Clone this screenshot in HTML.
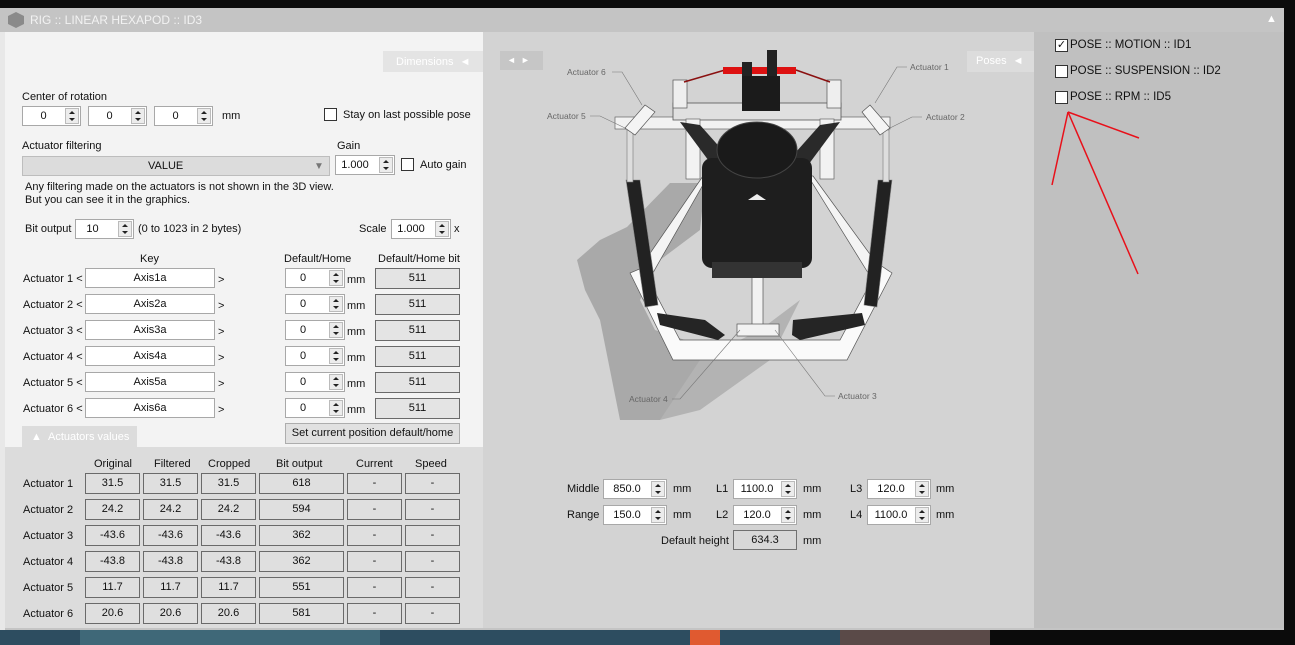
<!DOCTYPE html>
<html><head><meta charset="utf-8"><style>
*{box-sizing:border-box;margin:0;padding:0}
body{width:1295px;height:645px;overflow:hidden;background:#0b0b0b;font-family:"Liberation Sans",sans-serif;font-size:11px;color:#111;position:relative}
.a{position:absolute}
.t{position:absolute;white-space:nowrap;line-height:13px}
.box{position:absolute;background:#fff;border:1px solid #a8a8a8;text-align:center;line-height:18px;height:20px}
.ro{position:absolute;background:#e4e4e4;border:1px solid #6a6a6a;text-align:center;line-height:19px;height:21px}
.sp{position:absolute;background:#fff;border:1px solid #a8a8a8;height:20px;line-height:19px}
.sp span{position:absolute;left:0;right:16px;text-align:center}
.sp i{position:absolute;right:1px;top:1px;width:14px;height:16px;background:#ececec;border:1px solid #bbb}
.sp i:before{content:"";position:absolute;left:3px;top:2px;border-left:3px solid transparent;border-right:3px solid transparent;border-bottom:3px solid #222}
.sp i:after{content:"";position:absolute;left:3px;top:9px;border-left:3px solid transparent;border-right:3px solid transparent;border-top:3px solid #222}
.cb{position:absolute;width:13px;height:13px;background:#fff;border:1px solid #333}
.lv{position:absolute;background:#dfdfdf;border:1px solid #6a6a6a;text-align:center;line-height:19px;height:21px}
</style></head><body>
<div class="a" style="left:0;top:628px;width:990px;height:17px;background:#2d4d60"></div>
<div class="a" style="left:80px;top:628px;width:300px;height:17px;background:#3f6878"></div>
<div class="a" style="left:840px;top:628px;width:150px;height:17px;background:#5a4a48"></div>
<div class="a" style="left:690px;top:628px;width:30px;height:17px;background:#e05a30"></div>
<div class="a" style="left:0;top:8px;width:1284px;height:622px;background:#c4c4c4"></div>
<div class="a" style="left:8px;top:12px;width:16px;height:16px;background:#8a8a8a;clip-path:polygon(50% 0,100% 25%,100% 75%,50% 100%,0 75%,0 25%)"></div>
<div class="t" style="left:30px;top:14px;font-size:12px;color:#f2f2f2">RIG :: LINEAR HEXAPOD :: ID3</div>
<div class="t" style="left:1266px;top:13px;font-size:11px;color:#fff">▲</div>
<div class="a" style="left:0;top:32px;width:5px;height:598px;background:#e8e8e8"></div>
<div class="a" style="left:5px;top:32px;width:478px;height:415px;background:#f3f3f3"></div>
<div class="a" style="left:5px;top:447px;width:478px;height:181px;background:#dcdcdc"></div>
<div class="a" style="left:383px;top:51px;width:100px;height:21px;background:#e4e4e4"></div>
<div class="t" style="left:396px;top:56px;color:#fff;font-size:11px">Dimensions &nbsp;◄</div>

<div class="t" style="left:22px;top:91px">Center of rotation</div>
<div class="sp" style="left:22px;top:106px;width:59px"><span>0</span><i></i></div>
<div class="sp" style="left:88px;top:106px;width:59px"><span>0</span><i></i></div>
<div class="sp" style="left:154px;top:106px;width:59px"><span>0</span><i></i></div>
<div class="t" style="left:222px;top:110px">mm</div>
<div class="cb" style="left:324px;top:108px"></div>
<div class="t" style="left:343px;top:109px">Stay on last possible pose</div>

<div class="t" style="left:22px;top:140px">Actuator filtering</div>
<div class="t" style="left:337px;top:140px">Gain</div>
<div class="a" style="left:22px;top:156px;width:308px;height:20px;background:#dcdcdc;border:1px solid #bdbdbd"></div>
<div class="t" style="left:148px;top:160px">VALUE</div>
<div class="t" style="left:314px;top:160px;color:#777;font-size:10px">▼</div>
<div class="sp" style="left:335px;top:155px;width:60px"><span style="right:20px">1.000</span><i></i></div>
<div class="cb" style="left:401px;top:158px"></div>
<div class="t" style="left:420px;top:159px">Auto gain</div>
<div class="t" style="left:25px;top:181px">Any filtering made on the actuators is not shown in the 3D view.</div>
<div class="t" style="left:25px;top:194px">But you can see it in the graphics.</div>

<div class="t" style="left:25px;top:223px">Bit output</div>
<div class="sp" style="left:75px;top:219px;width:59px"><span style="right:24px">10</span><i></i></div>
<div class="t" style="left:138px;top:223px">(0 to 1023 in 2 bytes)</div>
<div class="t" style="left:359px;top:223px">Scale</div>
<div class="sp" style="left:391px;top:219px;width:60px"><span style="right:20px">1.000</span><i></i></div>
<div class="t" style="left:454px;top:223px">x</div>

<div class="t" style="left:140px;top:253px">Key</div>
<div class="t" style="left:284px;top:253px">Default/Home</div>
<div class="t" style="left:378px;top:253px">Default/Home bit</div>

<div class="t" style="left:23px;top:273px">Actuator 1 &lt;</div><div class="box" style="left:85px;top:268px;width:130px">Axis1a</div><div class="t" style="left:218px;top:274px">&gt;</div><div class="sp" style="left:285px;top:268px;width:60px"><span style="right:24px">0</span><i></i></div><div class="t" style="left:347px;top:274px">mm</div><div class="ro" style="left:375px;top:268px;width:85px">511</div>
<div class="t" style="left:23px;top:299px">Actuator 2 &lt;</div><div class="box" style="left:85px;top:294px;width:130px">Axis2a</div><div class="t" style="left:218px;top:300px">&gt;</div><div class="sp" style="left:285px;top:294px;width:60px"><span style="right:24px">0</span><i></i></div><div class="t" style="left:347px;top:300px">mm</div><div class="ro" style="left:375px;top:294px;width:85px">511</div>
<div class="t" style="left:23px;top:325px">Actuator 3 &lt;</div><div class="box" style="left:85px;top:320px;width:130px">Axis3a</div><div class="t" style="left:218px;top:326px">&gt;</div><div class="sp" style="left:285px;top:320px;width:60px"><span style="right:24px">0</span><i></i></div><div class="t" style="left:347px;top:326px">mm</div><div class="ro" style="left:375px;top:320px;width:85px">511</div>
<div class="t" style="left:23px;top:351px">Actuator 4 &lt;</div><div class="box" style="left:85px;top:346px;width:130px">Axis4a</div><div class="t" style="left:218px;top:352px">&gt;</div><div class="sp" style="left:285px;top:346px;width:60px"><span style="right:24px">0</span><i></i></div><div class="t" style="left:347px;top:352px">mm</div><div class="ro" style="left:375px;top:346px;width:85px">511</div>
<div class="t" style="left:23px;top:377px">Actuator 5 &lt;</div><div class="box" style="left:85px;top:372px;width:130px">Axis5a</div><div class="t" style="left:218px;top:378px">&gt;</div><div class="sp" style="left:285px;top:372px;width:60px"><span style="right:24px">0</span><i></i></div><div class="t" style="left:347px;top:378px">mm</div><div class="ro" style="left:375px;top:372px;width:85px">511</div>
<div class="t" style="left:23px;top:403px">Actuator 6 &lt;</div><div class="box" style="left:85px;top:398px;width:130px">Axis6a</div><div class="t" style="left:218px;top:404px">&gt;</div><div class="sp" style="left:285px;top:398px;width:60px"><span style="right:24px">0</span><i></i></div><div class="t" style="left:347px;top:404px">mm</div><div class="ro" style="left:375px;top:398px;width:85px">511</div>

<div class="a" style="left:285px;top:423px;width:175px;height:21px;background:#e1e1e1;border:1px solid #adadad;text-align:center;line-height:19px">Set current position default/home</div>
<div class="a" style="left:22px;top:426px;width:115px;height:21px;background:#dcdcdc"></div>
<div class="t" style="left:31px;top:431px;color:#fff">▲ &nbsp;Actuators values</div>

<div class="t" style="left:94px;top:458px">Original</div>
<div class="t" style="left:154px;top:458px">Filtered</div>
<div class="t" style="left:208px;top:458px">Cropped</div>
<div class="t" style="left:276px;top:458px">Bit output</div>
<div class="t" style="left:356px;top:458px">Current</div>
<div class="t" style="left:415px;top:458px">Speed</div>

<div class="t" style="left:23px;top:478px">Actuator 1</div><div class="lv" style="left:85px;top:473px;width:55px">31.5</div><div class="lv" style="left:143px;top:473px;width:55px">31.5</div><div class="lv" style="left:201px;top:473px;width:55px">31.5</div><div class="lv" style="left:259px;top:473px;width:85px">618</div><div class="lv" style="left:347px;top:473px;width:55px">-</div><div class="lv" style="left:405px;top:473px;width:55px">-</div>
<div class="t" style="left:23px;top:504px">Actuator 2</div><div class="lv" style="left:85px;top:499px;width:55px">24.2</div><div class="lv" style="left:143px;top:499px;width:55px">24.2</div><div class="lv" style="left:201px;top:499px;width:55px">24.2</div><div class="lv" style="left:259px;top:499px;width:85px">594</div><div class="lv" style="left:347px;top:499px;width:55px">-</div><div class="lv" style="left:405px;top:499px;width:55px">-</div>
<div class="t" style="left:23px;top:530px">Actuator 3</div><div class="lv" style="left:85px;top:525px;width:55px">-43.6</div><div class="lv" style="left:143px;top:525px;width:55px">-43.6</div><div class="lv" style="left:201px;top:525px;width:55px">-43.6</div><div class="lv" style="left:259px;top:525px;width:85px">362</div><div class="lv" style="left:347px;top:525px;width:55px">-</div><div class="lv" style="left:405px;top:525px;width:55px">-</div>
<div class="t" style="left:23px;top:556px">Actuator 4</div><div class="lv" style="left:85px;top:551px;width:55px">-43.8</div><div class="lv" style="left:143px;top:551px;width:55px">-43.8</div><div class="lv" style="left:201px;top:551px;width:55px">-43.8</div><div class="lv" style="left:259px;top:551px;width:85px">362</div><div class="lv" style="left:347px;top:551px;width:55px">-</div><div class="lv" style="left:405px;top:551px;width:55px">-</div>
<div class="t" style="left:23px;top:582px">Actuator 5</div><div class="lv" style="left:85px;top:577px;width:55px">11.7</div><div class="lv" style="left:143px;top:577px;width:55px">11.7</div><div class="lv" style="left:201px;top:577px;width:55px">11.7</div><div class="lv" style="left:259px;top:577px;width:85px">551</div><div class="lv" style="left:347px;top:577px;width:55px">-</div><div class="lv" style="left:405px;top:577px;width:55px">-</div>
<div class="t" style="left:23px;top:608px">Actuator 6</div><div class="lv" style="left:85px;top:603px;width:55px">20.6</div><div class="lv" style="left:143px;top:603px;width:55px">20.6</div><div class="lv" style="left:201px;top:603px;width:55px">20.6</div><div class="lv" style="left:259px;top:603px;width:85px">581</div><div class="lv" style="left:347px;top:603px;width:55px">-</div><div class="lv" style="left:405px;top:603px;width:55px">-</div>

<div class="a" style="left:483px;top:32px;width:551px;height:596px;background:#d3d3d3"></div>
<div class="a" style="left:500px;top:51px;width:43px;height:19px;background:#c6c6c6"></div>
<div class="t" style="left:507px;top:54px;color:#fff;font-size:9px">◄ &nbsp;►</div>
<div class="a" style="left:967px;top:51px;width:67px;height:21px;background:#dcdcdc"></div>
<div class="t" style="left:976px;top:55px;color:#fff">Poses &nbsp;◄</div>

<svg class="a" style="left:483px;top:32px" width="551" height="400" viewBox="483 32 551 400">
 <polygon points="577,260 600,240 627,227 670,183 705,183 700,230 660,260 640,300 655,330 700,345 720,360 700,380 660,420 620,420 615,395 600,320 585,290" fill="#a9a9a9"/>
 <polygon points="700,360 760,330 800,300 770,360 700,410 660,420" fill="#b3b3b3"/>
 <polygon points="630,273 673,360 847,360 892,273 880,265 840,340 680,340 642,268" fill="#fafafa" stroke="#555" stroke-width="0.7"/>
 <polygon points="640,268 703,176 708,176 650,278" fill="#f4f4f4" stroke="#555" stroke-width="0.7"/>
 <polygon points="808,176 813,176 880,268 870,276" fill="#f4f4f4" stroke="#555" stroke-width="0.7"/>
 <rect x="752" y="270" width="11" height="58" fill="#f2f2f2" stroke="#555" stroke-width="0.7"/>
 <rect x="615" y="117" width="275" height="12" fill="#f2f2f2" stroke="#666" stroke-width="0.7"/>
 <rect x="673" y="103" width="168" height="17" fill="#e0e0e0" stroke="#555" stroke-width="0.8"/>
 <rect x="686" y="119" width="14" height="60" fill="#f2f2f2" stroke="#666" stroke-width="0.7"/>
 <rect x="820" y="119" width="14" height="60" fill="#f2f2f2" stroke="#666" stroke-width="0.7"/>
 <rect x="673" y="80" width="14" height="28" fill="#eee" stroke="#555" stroke-width="0.7"/>
 <rect x="827" y="80" width="14" height="28" fill="#eee" stroke="#555" stroke-width="0.7"/>
 <polygon points="680,122 700,125 740,170 720,176" fill="#2a2a2a"/>
 <polygon points="840,122 820,125 780,170 800,176" fill="#2a2a2a"/>
 <line x1="684" y1="82" x2="725" y2="70" stroke="#8a1010" stroke-width="1.5"/>
 <line x1="796" y1="70" x2="830" y2="82" stroke="#8a1010" stroke-width="1.5"/>
 <rect x="723" y="67" width="73" height="7" fill="#dd1111"/>
 <rect x="742" y="62" width="10" height="16" fill="#222"/><rect x="767" y="50" width="10" height="26" fill="#222"/>
 <rect x="742" y="76" width="38" height="35" fill="#1b1b1b"/>
 <rect x="702" y="158" width="110" height="110" rx="10" fill="#1e1e1e"/>
 <rect x="712" y="262" width="90" height="16" fill="#333"/>
 <ellipse cx="757" cy="150" rx="40" ry="28" fill="#1a1a1a" stroke="#444"/>
 <polygon points="748,200 757,194 766,200" fill="#eee"/>
 <polygon points="626,180 640,180 658,305 645,307" fill="#222" stroke="#888" stroke-width="0.6"/>
 <polygon points="878,180 892,180 877,307 864,305" fill="#222" stroke="#888" stroke-width="0.6"/>
 <rect x="627" y="130" width="6" height="52" fill="#ddd" stroke="#777" stroke-width="0.6"/>
 <rect x="883" y="130" width="6" height="52" fill="#ddd" stroke="#777" stroke-width="0.6"/>
 <polygon points="625,128 645,105 655,112 635,135" fill="#f4f4f4" stroke="#555" stroke-width="0.7"/>
 <polygon points="870,105 890,128 880,135 862,112" fill="#f4f4f4" stroke="#555" stroke-width="0.7"/>
 <polygon points="657,313 705,320 725,335 718,340 660,325" fill="#252525"/>
 <polygon points="793,320 862,313 865,325 800,340 792,335" fill="#252525"/>
 <rect x="737" y="324" width="42" height="12" fill="#f2f2f2" stroke="#555" stroke-width="0.7"/>
 <g stroke="#777" stroke-width="0.6" fill="none">
  <polyline points="612,72 622,72 642,105"/><polyline points="590,116 600,116 625,128"/>
  <polyline points="907,67 897,67 875,103"/><polyline points="922,117 912,117 890,128"/>
  <polyline points="672,399 680,399 740,330"/><polyline points="835,396 825,396 775,330"/>
 </g>
 <text x="567" y="75" font-size="8.5" fill="#666" font-family="Liberation Sans">Actuator 6</text>
 <text x="547" y="119" font-size="8.5" fill="#666" font-family="Liberation Sans">Actuator 5</text>
 <text x="910" y="70" font-size="8.5" fill="#666" font-family="Liberation Sans">Actuator 1</text>
 <text x="926" y="120" font-size="8.5" fill="#666" font-family="Liberation Sans">Actuator 2</text>
 <text x="629" y="402" font-size="8.5" fill="#666" font-family="Liberation Sans">Actuator 4</text>
 <text x="838" y="399" font-size="8.5" fill="#666" font-family="Liberation Sans">Actuator 3</text>
</svg>

<div class="t" style="left:567px;top:483px">Middle</div>
<div class="sp" style="left:603px;top:479px;width:64px"><span>850.0</span><i></i></div>
<div class="t" style="left:673px;top:483px">mm</div>
<div class="t" style="left:716px;top:483px">L1</div>
<div class="sp" style="left:733px;top:479px;width:64px"><span>1100.0</span><i></i></div>
<div class="t" style="left:803px;top:483px">mm</div>
<div class="t" style="left:850px;top:483px">L3</div>
<div class="sp" style="left:867px;top:479px;width:64px"><span>120.0</span><i></i></div>
<div class="t" style="left:936px;top:483px">mm</div>
<div class="t" style="left:567px;top:509px">Range</div>
<div class="sp" style="left:603px;top:505px;width:64px"><span>150.0</span><i></i></div>
<div class="t" style="left:673px;top:509px">mm</div>
<div class="t" style="left:716px;top:509px">L2</div>
<div class="sp" style="left:733px;top:505px;width:64px"><span>120.0</span><i></i></div>
<div class="t" style="left:803px;top:509px">mm</div>
<div class="t" style="left:850px;top:509px">L4</div>
<div class="sp" style="left:867px;top:505px;width:64px"><span>1100.0</span><i></i></div>
<div class="t" style="left:936px;top:509px">mm</div>
<div class="t" style="left:661px;top:535px">Default height</div>
<div class="a" style="left:733px;top:530px;width:64px;height:20px;background:#d8d8d8;border:1px solid #707070;text-align:center;line-height:18px">634.3</div>
<div class="t" style="left:803px;top:535px">mm</div>

<div class="a" style="left:1034px;top:32px;width:250px;height:596px;background:#c0c0c0"></div>
<div class="cb" style="left:1055px;top:39px;font-size:11px;line-height:11px;text-align:center">✓</div>
<div class="t" style="left:1070px;top:39px;font-size:11.5px">POSE :: MOTION :: ID1</div>
<div class="cb" style="left:1055px;top:65px"></div>
<div class="t" style="left:1070px;top:65px;font-size:11.5px">POSE :: SUSPENSION :: ID2</div>
<div class="cb" style="left:1055px;top:91px"></div>
<div class="t" style="left:1070px;top:91px;font-size:11.5px">POSE :: RPM :: ID5</div>
<svg class="a" style="left:1034px;top:100px" width="120" height="190" viewBox="1034 100 120 190">
 <g stroke="#e8101a" stroke-width="1.5"><line x1="1068" y1="112" x2="1052" y2="185"/><line x1="1068" y1="112" x2="1139" y2="138"/><line x1="1068" y1="112" x2="1138" y2="274"/></g>
</svg>
</body></html>
